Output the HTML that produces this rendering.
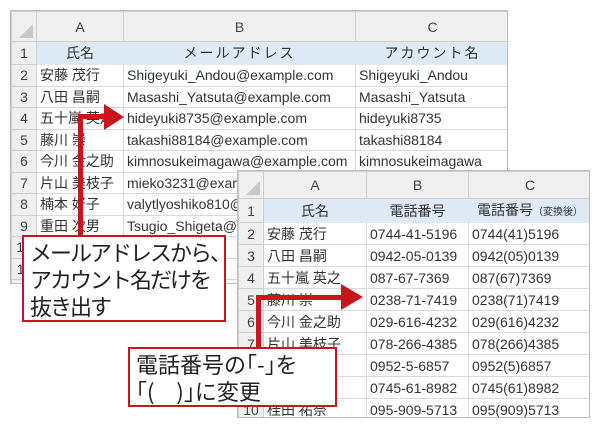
<!DOCTYPE html>
<html><head><meta charset="utf-8"><style>
*{margin:0;padding:0;box-sizing:border-box}
body{width:600px;height:428px;background:#fff;position:relative;overflow:hidden;font-family:"Liberation Sans","Noto Sans CJK JP",sans-serif;color:#333}
.sheet{position:absolute;overflow:hidden;border:1px solid #bdbdbd;background:#fff}
table{border-collapse:collapse;table-layout:fixed}
td{border:1px solid #d9d9d9;font-size:14px;white-space:nowrap;overflow:hidden;padding:0 3px;line-height:1}
tr.h td{background:#efefef;text-align:center;color:#444;border-color:#cfcfcf}
tr.r1 td{background:#dde9f5;text-align:center;border-color:#dde9f5}
td.n{background:#efefef;text-align:center;color:#444;border-color:#cfcfcf;padding:0}
tr.r1 td.n{background:#efefef;border-color:#cfcfcf}
.corner{position:relative}
.corner:after{content:"";position:absolute;right:3px;bottom:3px;border-left:14px solid transparent;border-bottom:14px solid #c8c8c8}
.call{position:absolute;border:2px solid #c8161d;background:#fff;color:#222;font-family:"Noto Sans CJK JP",sans-serif;padding-left:6px;white-space:nowrap;overflow:hidden}
.red{position:absolute;background:#c8161d}
</style></head><body>

<div class="sheet" style="left:10px;top:10px;width:498px;height:274px">
<table style="width:498px">
<col style="width:25px"><col style="width:87px"><col style="width:232px"><col style="width:154px">
<tr class="h" style="height:30px"><td class="n corner"></td><td>A</td><td>B</td><td>C</td></tr>
<tr class="r1" style="height:23px"><td class="n">1</td><td>氏名</td><td style="letter-spacing:2px">メールアドレス</td><td style="letter-spacing:2px">アカウント名</td></tr>
<tr style="height:21.5px"><td class="n">2</td><td>安藤 茂行</td><td>Shigeyuki_Andou@example.com</td><td>Shigeyuki_Andou</td></tr>
<tr style="height:21.5px"><td class="n">3</td><td>八田 昌嗣</td><td>Masashi_Yatsuta@example.com</td><td>Masashi_Yatsuta</td></tr>
<tr style="height:21.5px"><td class="n">4</td><td>五十嵐 英之</td><td>hideyuki8735@example.com</td><td>hideyuki8735</td></tr>
<tr style="height:21.5px"><td class="n">5</td><td>藤川 崇</td><td>takashi88184@example.com</td><td>takashi88184</td></tr>
<tr style="height:21.5px"><td class="n">6</td><td>今川 金之助</td><td>kimnosukeimagawa@example.com</td><td>kimnosukeimagawa</td></tr>
<tr style="height:21.5px"><td class="n">7</td><td>片山 美枝子</td><td>mieko3231@example.com</td><td></td></tr>
<tr style="height:21.5px"><td class="n">8</td><td>楠本 好子</td><td>valytlyoshiko810@example.com</td><td></td></tr>
<tr style="height:21.5px"><td class="n">9</td><td>重田 次男</td><td>Tsugio_Shigeta@example.com</td><td></td></tr>
<tr style="height:21.5px"><td class="n">10</td><td></td><td>example.com</td><td></td></tr>
<tr style="height:21.5px"><td class="n">11</td><td></td><td>example.com</td><td></td></tr>
<tr style="height:21.5px"><td class="n">12</td><td></td><td></td><td></td></tr>
</table></div>

<div class="sheet" style="left:237px;top:170px;width:353px;height:248px">
<table style="width:353px">
<col style="width:25px"><col style="width:103px"><col style="width:102px"><col style="width:123px">
<tr class="h" style="height:27px"><td class="n corner"></td><td>A</td><td>B</td><td>C</td></tr>
<tr class="r1" style="height:24px"><td class="n">1</td><td>氏名</td><td>電話番号</td><td>電話番号<span style="font-size:10px">（変換後）</span></td></tr>
<tr style="height:22px"><td class="n">2</td><td>安藤 茂行</td><td>0744-41-5196</td><td>0744(41)5196</td></tr>
<tr style="height:22px"><td class="n">3</td><td>八田 昌嗣</td><td>0942-05-0139</td><td>0942(05)0139</td></tr>
<tr style="height:22px"><td class="n">4</td><td>五十嵐 英之</td><td>087-67-7369</td><td>087(67)7369</td></tr>
<tr style="height:22px"><td class="n">5</td><td>藤川 崇</td><td>0238-71-7419</td><td>0238(71)7419</td></tr>
<tr style="height:22px"><td class="n">6</td><td>今川 金之助</td><td>029-616-4232</td><td>029(616)4232</td></tr>
<tr style="height:22px"><td class="n">7</td><td>片山 美枝子</td><td>078-266-4385</td><td>078(266)4385</td></tr>
<tr style="height:22px"><td class="n">8</td><td>楠本 好子</td><td>0952-5-6857</td><td>0952(5)6857</td></tr>
<tr style="height:22px"><td class="n">9</td><td>重田 次男</td><td>0745-61-8982</td><td>0745(61)8982</td></tr>
<tr style="height:22px"><td class="n">10</td><td>桂田 祐奈</td><td>095-909-5713</td><td>095(909)5713</td></tr>
</table></div>

<!-- arrow 1 -->
<div class="red" style="left:78px;top:114px;width:5px;height:122px"></div>
<div class="red" style="left:78px;top:114px;width:30px;height:5px"></div>
<div style="position:absolute;left:104px;top:104px;border-top:13px solid transparent;border-bottom:13px solid transparent;border-left:20px solid #c8161d"></div>
<!-- arrow 2 -->
<div class="red" style="left:256px;top:295px;width:5px;height:53px"></div>
<div class="red" style="left:256px;top:295px;width:88px;height:5px"></div>
<div style="position:absolute;left:341px;top:284px;border-top:13px solid transparent;border-bottom:13px solid transparent;border-left:22px solid #c8161d"></div>

<div class="call" style="left:22px;top:235px;width:204px;height:87px;font-size:22px;letter-spacing:-2px;line-height:27px;padding-top:2px">メールアドレスから、<br>アカウント名だけを<br>抜き出す</div>
<div class="call" style="left:128px;top:347px;width:209px;height:60px;font-size:22px;letter-spacing:0;line-height:27px;padding-top:2px">電話番号の｢-｣を<br>｢(　)｣に変更</div>
</body></html>
